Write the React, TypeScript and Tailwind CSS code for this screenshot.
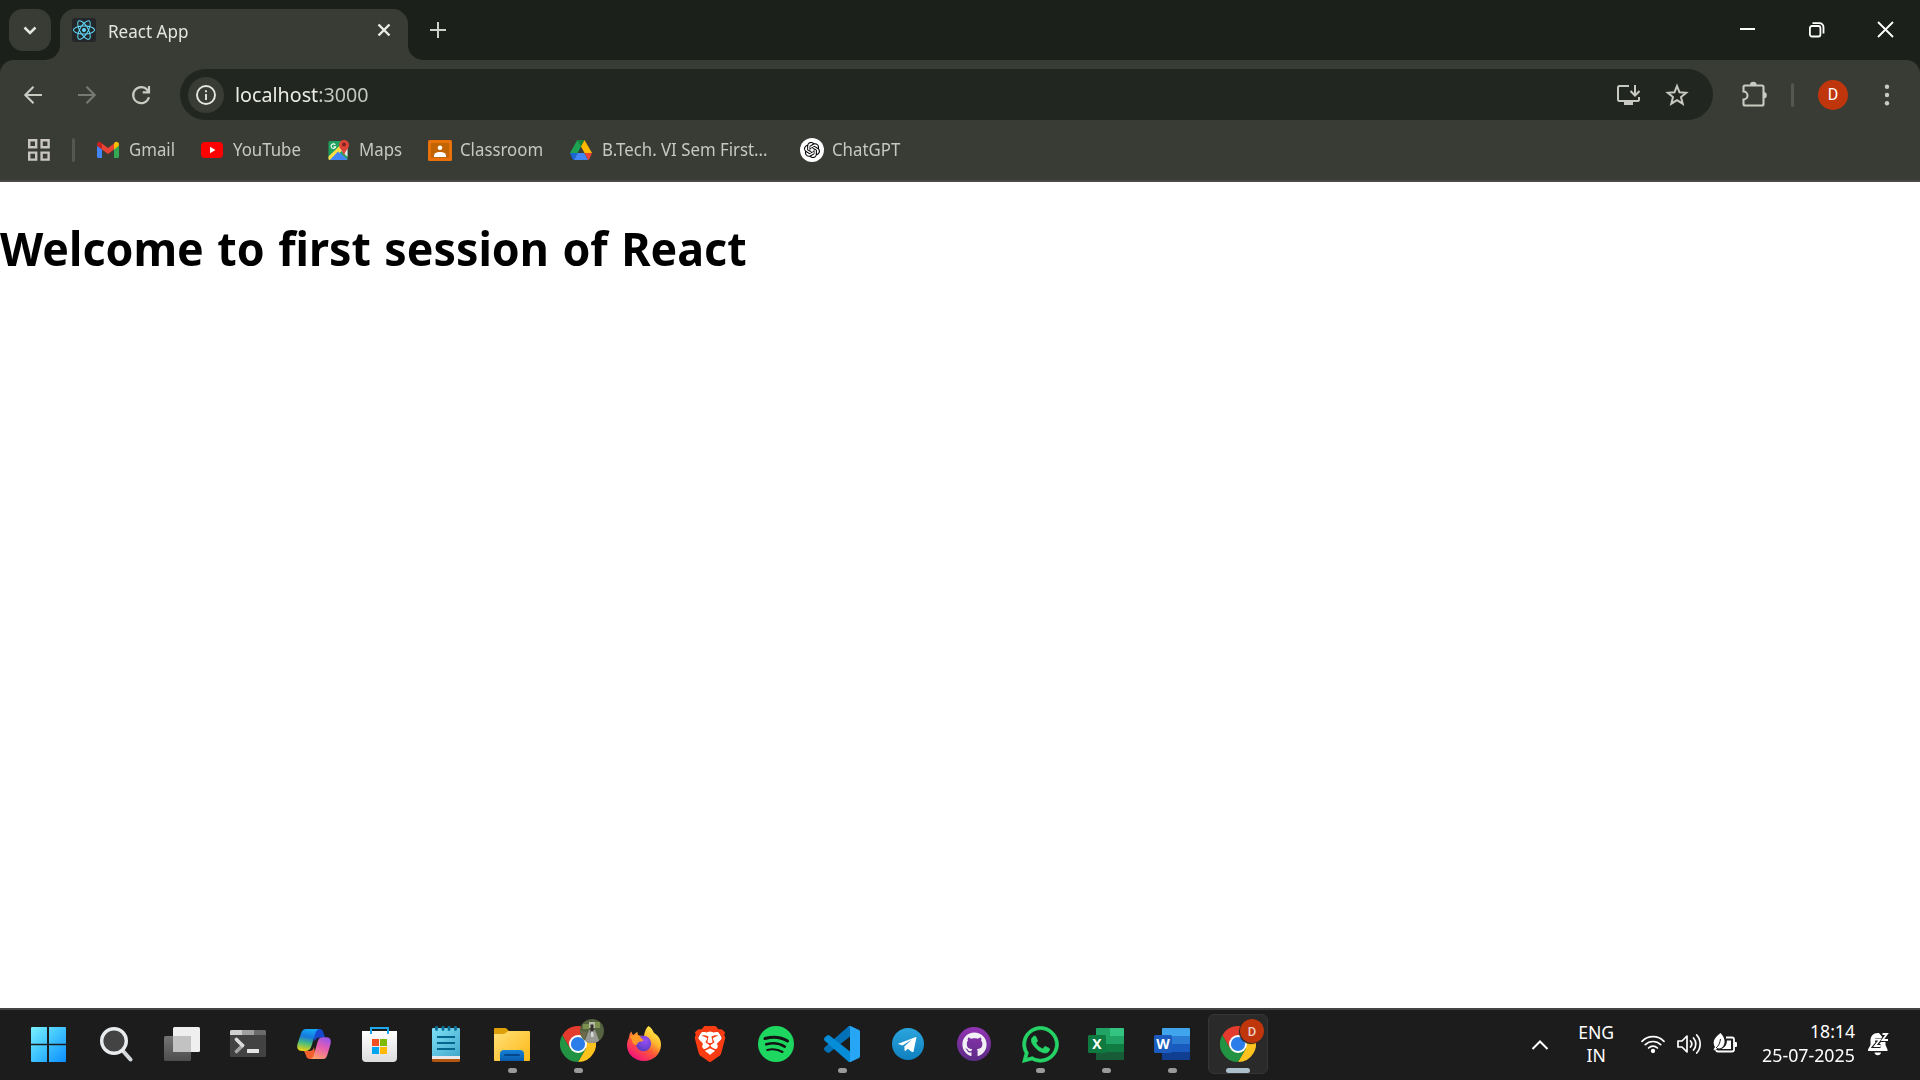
import type { ReactNode } from 'react';
import { SiBrave, SiOpenai, SiReact } from 'react-icons/si';
import { FaGithub, FaWhatsapp } from 'react-icons/fa';

const ReactFavicon = () => (
  <span className="flex h-6 w-6 items-center justify-center rounded-[3px] bg-[#23272a]">
    <SiReact className="h-[22px] w-[22px] text-[#61dafb]" />
  </span>
);

const GmailIcon = () => (
  <svg className="h-[18px] w-[22px]" viewBox="0 0 22 18">
    <path d="M0 5v10.500a1.500 1.500 0 0 0 1.500 1.500H5V7.500z" fill="#4285f4" />
    <path d="M17 7.500V17h3.500a1.500 1.500 0 0 0 1.500-1.500V5z" fill="#34a853" />
    <path d="M17 2.500v6l5-3.800V3.500C22 1 19.300 0 17.500 1.500z" fill="#fbbc04" />
    <path d="M5 8.500v-6l6 4.500 6-4.500v6L11 13z" fill="#ea4335" />
    <path d="M0 3.500v1.300l5 3.700v-6L4.500 1.500C2.700 0 0 1 0 3.500z" fill="#c5221f" />
  </svg>
);

const YouTubeIcon = () => (
  <svg className="h-4 w-[22px]" viewBox="0 0 22 16">
    <rect width="22" height="16" rx="4" fill="#f00" />
    <path d="M9 4.700v6.600L14.500 8z" fill="#fff" />
  </svg>
);

const MapsIcon = () => (
  <svg className="h-[22px] w-[22px]" viewBox="0 0 22 22">
    <rect x="0.500" y="2" width="19" height="19" rx="1.500" fill="#1fa15d" />
    <path d="M10 12l9.500 8.500V21H1z" fill="#4f8df5" />
    <path d="M0.500 17.500L15 3.500 19 7 4 21H2a1.500 1.500 0 0 1-1.500-1.500z" fill="#ffdc48" />
    <path d="M10 12.500L18.500 21H1.800z" fill="#4285f4" />
    <path d="M12 10.500L19.500 18V9l-4-2z" fill="#e3e6ea" />
    <path d="M16 1a5 5 0 0 1 5 5c0 4-4 5-5 11-1-6-5-7-5-11a5 5 0 0 1 5-5z" fill="#db4437" />
    <circle cx="16" cy="5.500" r="1.900" fill="#7b231e" />
    <path d="M7.300 5.800a2.300 2.300 0 1 0 .3 2.100H5.500" fill="none" stroke="#fff" strokeWidth="1.100" />
  </svg>
);

const ClassroomIcon = () => (
  <svg className="h-[21px] w-6" viewBox="0 0 24 21">
    <rect width="24" height="21" rx="1.500" fill="#e8710a" />
    <rect x="3" y="3" width="18" height="15" fill="#c26401" />
    <circle cx="12" cy="7.800" r="2.300" fill="#fff" />
    <path d="M6 17v-1.500c0-2.500 3-3.500 6-3.500s6 1 6 3.500V17z" fill="#fff" />
  </svg>
);

const DriveIcon = () => (
  <svg className="h-5 w-[22px]" viewBox="0 0 22 20">
    <path d="M7.300 0h4.200L11 6.500 7.500 13H0z" fill="#1ea353" />
    <path d="M7.300 0h7.200L11 6.500z" fill="#188038" />
    <path d="M14.500 0L22 13h-7.500L11 6.500z" fill="#ffba00" />
    <path d="M0 13h7.500L4 20c-.7 0-1-.3-1.300-.8z" fill="#1967d2" />
    <path d="M7.500 13h7L18 20H4z" fill="#4285f4" />
    <path d="M14.500 13H22l-2.700 6.200c-.3.500-.7.800-1.300.8z" fill="#ea4335" />
  </svg>
);

const ChatGptIcon = () => (
  <span className="flex h-6 w-6 items-center justify-center rounded-full bg-white">
    <SiOpenai className="h-4 w-4 text-black" />
  </span>
);

const WindowsIcon = () => (
  <svg className="mr-[5px] h-9 w-9" viewBox="0 0 36 36">
    <defs>
      <linearGradient id="win" x1="0" y1="0" x2="36" y2="36" gradientUnits="userSpaceOnUse">
        <stop offset="0" stopColor="#7df4ff" />
        <stop offset="0.450" stopColor="#45c8ff" />
        <stop offset="1" stopColor="#0a8eff" />
      </linearGradient>
    </defs>
    <path d="M2 1h15v17H1V2a1 1 0 0 1 1-1zM19 1h16a1 1 0 0 1 1 1v16H19zM1 19h16v17H2a1 1 0 0 1-1-1zM19 19h17v16a1 1 0 0 1-1 1H19z" fill="url(#win)" />
    <path d="M18 1v35M1 18.500h35" stroke="#1c1c1c" strokeWidth="1.500" />
  </svg>
);

const SearchIcon = () => (
  <svg className="h-9 w-9" viewBox="0 0 36 36">
    <path d="M25 25l7.500 8.500" stroke="#d5d8db" strokeWidth="4" strokeLinecap="round" />
    <circle cx="16" cy="15" r="12.300" fill="#434343" stroke="#e9ecee" strokeWidth="3.400" />
  </svg>
);

const TaskViewIcon = () => (
  <svg className="h-9 w-9" viewBox="0 0 36 36">
    <defs>
      <linearGradient id="tv" x1="0" y1="0" x2="0" y2="1">
        <stop offset="0" stopColor="#747474" />
        <stop offset="1" stopColor="#4d4d4d" />
      </linearGradient>
    </defs>
    <rect x="0" y="10" width="27" height="25" rx="1.500" fill="url(#tv)" />
    <rect x="9" y="1" width="27" height="25" rx="1.500" fill="#efefef" />
    <path d="M9 10h18v16H10a1 1 0 0 1-1-1z" fill="#c2c2c2" />
  </svg>
);

const TerminalIcon = () => (
  <svg className="h-9 w-9" viewBox="0 0 36 36">
    <rect y="4" width="36" height="27" rx="1.500" fill="#424242" />
    <path d="M1.500 4H12v5H0V5.500A1.500 1.500 0 0 1 1.500 4z" fill="#cfcfcf" />
    <path d="M12 4h12v5H12z" fill="#a0a0a0" />
    <path d="M24 4h10.500A1.500 1.500 0 0 1 36 5.500V9H24z" fill="#6b6b6b" />
    <path d="M12.500 19.500L6.500 25.500" stroke="#a5a5a5" strokeWidth="3.600" strokeLinecap="round" />
    <path d="M6.500 13.500l6 6" stroke="#dcdcdc" strokeWidth="3.600" strokeLinecap="round" />
    <rect x="17" y="23" width="12" height="4" rx="0.500" fill="#e6e6e6" />
  </svg>
);

const CopilotIcon = () => (
  <svg className="h-9 w-9" viewBox="0 0 36 36">
    <defs>
      <linearGradient id="cpA" x1="0.500" y1="0" x2="0.300" y2="1">
        <stop offset="0" stopColor="#14a7f5" />
        <stop offset="0.350" stopColor="#1678dc" />
        <stop offset="0.650" stopColor="#4bbd7c" />
        <stop offset="1" stopColor="#efd213" />
      </linearGradient>
      <linearGradient id="cpB" x1="0.700" y1="0" x2="0.300" y2="1">
        <stop offset="0" stopColor="#9a55ec" />
        <stop offset="0.450" stopColor="#e65fae" />
        <stop offset="1" stopColor="#ffa06b" />
      </linearGradient>
    </defs>
    <path d="M15 3h8.500c2.500 0 3.300 1.500 4 4l1.500 4.500h-5c-3 0-4.500 1.500-5.300 4z" fill="#1749d0" />
    <path d="M8 25h5c3 0 4-1 5-4l2 12h-6c-2.500 0-3.500-1.500-4-3.500z" fill="#f4602c" />
    <path d="M10 3h14c-2.500 0-3.800 1.500-4.700 4.500L15.500 20c-1 3.500-3 5-6 5H6c-4 0-5.500-3-4.500-7L5 7.500C6 4.500 7.500 3 10 3z" fill="url(#cpA)" />
    <path d="M27 33H13.500c2.500 0 3.500-1.500 4.500-4.500L21.500 16c1-3.500 2.500-4.800 5.500-4.800h3.500c4 0 5 3 4 7L31.500 28.500C30.500 31.500 29.500 33 27 33z" fill="url(#cpB)" />
  </svg>
);

const StoreIcon = () => (
  <svg className="h-9 w-9" viewBox="0 0 36 36">
    <defs>
      <linearGradient id="st" x1="0" y1="0" x2="0" y2="1">
        <stop offset="0" stopColor="#fff" />
        <stop offset="1" stopColor="#dcdcdc" />
      </linearGradient>
    </defs>
    <path d="M0 5h35v27a4 4 0 0 1-4 4H4a4 4 0 0 1-4-4z" fill="url(#st)" />
    <path d="M9 8V2h17v6" fill="none" stroke="#1ea7ea" strokeWidth="2" />
    <path d="M10 13h7v7h-7z" fill="#f25022" />
    <path d="M18 13h7v7h-7z" fill="#7fba00" />
    <path d="M10 21h7v7h-7z" fill="#00a4ef" />
    <path d="M18 21h7v7h-7z" fill="#ffb900" />
  </svg>
);

const NotepadIcon = () => (
  <svg className="h-9 w-9" viewBox="0 0 36 36">
    <defs>
      <linearGradient id="np" x1="0" y1="0" x2="1" y2="1">
        <stop offset="0" stopColor="#7ee0f6" />
        <stop offset="1" stopColor="#42a9cc" />
      </linearGradient>
    </defs>
    <rect x="4" y="26" width="28" height="10" rx="1.500" fill="#b5560f" />
    <path d="M4 28h28v5H4z" fill="#e8e8ea" />
    <path d="M5 2h26a1 1 0 0 1 1 1v27H4V3a1 1 0 0 1 1-1z" fill="url(#np)" />
    <path d="M9 11h18M9 17h18M9 23h18" stroke="#03678d" strokeWidth="2" />
    <path d="M8.500 1v2.500M15 1v2.500M21 1v2.500M27.500 1v2.500" stroke="#0b6f96" strokeWidth="2.800" strokeLinecap="round" />
  </svg>
);

const ExplorerIcon = () => (
  <svg className="h-9 w-9" viewBox="0 0 36 36">
    <defs>
      <linearGradient id="ex" x1="0" y1="0" x2="1" y2="1">
        <stop offset="0" stopColor="#ffe07a" />
        <stop offset="1" stopColor="#fdb813" />
      </linearGradient>
      <linearGradient id="exb" x1="0" y1="0" x2="0" y2="1">
        <stop offset="0" stopColor="#1482d8" />
        <stop offset="1" stopColor="#0a5cab" />
      </linearGradient>
    </defs>
    <path d="M0 3a1 1 0 0 1 1-1h10c1.500 0 2.500 1.500 4 3v4H0z" fill="#dea00a" />
    <path d="M0 8h9c3 0 4-3 6-3h20a1 1 0 0 1 1 1v28a1 1 0 0 1-1 1H1a1 1 0 0 1-1-1z" fill="url(#ex)" />
    <path d="M6 35v-7a4 4 0 0 1 4-4h16a4 4 0 0 1 4 4v7z" fill="url(#exb)" />
    <path d="M11 29h14" stroke="#06468a" strokeWidth="1.800" strokeLinecap="round" />
  </svg>
);

const ChromeIcon = () => (
  <svg className="h-9 w-9" viewBox="0 0 36 36">
    <path d="M18 9h15.600A18 18 0 0 1 18 36l7.800-13.500z" fill="#fcc31e" />
    <path d="M10.200 22.500L2.400 9A18 18 0 0 0 18 36l7.800-13.500z" fill="#229342" />
    <path d="M18 9h15.600A18 18 0 0 0 2.400 9l7.800 13.500z" fill="#e33b2e" />
    <circle cx="18" cy="18" r="9" fill="#fff" />
    <circle cx="18" cy="18" r="7.100" fill="#2b7de9" />
  </svg>
);

const FirefoxIcon = () => (
  <svg className="h-9 w-9" viewBox="0 0 36 36">
    <defs>
      <linearGradient id="ff" x1="0.850" y1="0.050" x2="0.250" y2="0.950">
        <stop offset="0" stopColor="#fff14a" />
        <stop offset="0.350" stopColor="#ffb82e" />
        <stop offset="0.600" stopColor="#ff5a35" />
        <stop offset="1" stopColor="#f2137e" />
      </linearGradient>
      <radialGradient id="ffp" cx="0.600" cy="0.300" r="0.700">
        <stop offset="0" stopColor="#9a50f5" />
        <stop offset="1" stopColor="#5a3bc4" />
      </radialGradient>
    </defs>
    <path d="M22.500 0c3 2 4.500 4.500 5.500 7 4.500 2.500 7.200 7 7 12-.2 9-7.500 16-17 16S1 28 1 19.500c0-3 .7-5.500 2-8 .2-2.700 1.200-5 2.500-6 .3 1.600.8 2.600 1.700 3.600C9 8 10 6.500 11.500 5.800c-.2 1.700.2 2.800 1.300 3.700l5.200.5c.5-4 2-8 4.500-10z" fill="url(#ff)" />
    <circle cx="17.500" cy="17.500" r="7.700" fill="url(#ffp)" />
    <path d="M3.500 11c3-2.500 7-2.500 9.500-1l4.500 4c-1.500 2.200-3.500 1.300-5 2.300-1.500 1-.8 2.700-2.500 2.700C5 18 7 12.500 3.500 11z" fill="#ff9a28" />
  </svg>
);

const BraveIcon = () => (
  <span className="relative flex h-9 w-9 items-center justify-center">
    <svg className="absolute inset-0 h-9 w-9" viewBox="0 0 36 36">
      <path d="M9 6l9-1 9 1 3 6-4 14-8 6-8-6-4-14z" fill="#fff" />
    </svg>
    <SiBrave className="relative h-9 w-9 text-[#fb3c13]" />
  </span>
);

const SpotifyIcon = () => (
  <svg className="h-9 w-9" viewBox="0 0 36 36">
    <circle cx="18" cy="18" r="18" fill="#1ed760" />
    <g fill="none" stroke="#141414" strokeLinecap="round">
      <path d="M7 12.500c8-2.200 16.500-1.300 22.500 2.500" strokeWidth="3.100" />
      <path d="M8.300 18.300c6.500-1.900 13.500-1 18.500 2.300" strokeWidth="2.600" />
      <path d="M9.300 24c5.500-1.400 10.800-.7 15.200 2" strokeWidth="2.100" />
    </g>
  </svg>
);

const VsCodeIcon = () => (
  <svg className="h-9 w-9" viewBox="0 0 36 36">
    <path d="M26 10.500L5.500 26.400c-.8.600-1.800.600-2.500 0l-2.300-2C-.2 23.500-.2 22 .7 21.200L24 .8 26.500 0z" fill="#0271b8" />
    <path d="M26 25.500L5.500 9.600C4.700 9 3.700 9 3 9.600l-2.300 2c-.9.900-.9 2.400 0 3.200L24 35.200l2.500.8z" fill="#078dd8" />
    <path d="M26.500 0L35 4a1.800 1.800 0 0 1 1 1.700v24.600A1.800 1.800 0 0 1 35 32l-8.500 4c-1 .3-1.800 0-2.700-.8 1 .8 2.200.3 2.200-1V1.800c0-1.300-1.200-1.800-2.200-1 .9-.8 1.700-1.100 2.700-.8z" fill="#26a6f4" />
  </svg>
);

const TelegramIcon = () => (
  <svg className="h-9 w-9" viewBox="0 0 36 36">
    <defs>
      <linearGradient id="tg" x1="0" y1="0" x2="0" y2="1">
        <stop offset="0" stopColor="#2ba5dd" />
        <stop offset="1" stopColor="#0f80bf" />
      </linearGradient>
    </defs>
    <circle cx="18" cy="18" r="16" fill="url(#tg)" />
    <path d="M8.200 17.800l17-6.600c.8-.3 1.300.2 1.100 1.100l-2.700 12.900c-.2.900-.8 1.100-1.600.7l-4.300-3.200-2 2c-.4.400-.8.500-1 .2l-.4-4.500 7.600-6.900-9.400 5.900-4.300-1.300c-.600-.1-.6-.1 0-.3z" fill="#fff" />
  </svg>
);

const GitHubIcon = () => (
  <span className="flex h-[34px] w-[34px] items-center justify-center rounded-full bg-linear-to-b from-[#9233b4] to-[#5c2b86]">
    <FaGithub className="h-[25px] w-[25px] text-[#f2f0f5]" />
  </span>
);

const ExcelIcon = () => (
  <svg className="h-9 w-9" viewBox="0 0 36 36">
    <path d="M9 2h14v8H8V3a1 1 0 0 1 1-1z" fill="#21a366" />
    <path d="M22 2h13a1 1 0 0 1 1 1v7H22z" fill="#33c481" />
    <path d="M8 10h14v8H8z" fill="#21a366" />
    <path d="M22 10h14v8H22z" fill="#21a366" />
    <path d="M8 18h28v8H8z" fill="#107c41" />
    <path d="M8 26h28v7a1 1 0 0 1-1 1H9a1 1 0 0 1-1-1z" fill="#185c37" />
    <rect x="0" y="9" width="18" height="18" rx="1.500" fill="#0f7a3f" />
    <text x="9" y="23.200" textAnchor="middle" className="fill-white font-['Open_Sans',sans-serif] text-[14px] font-bold">X</text>
  </svg>
);

const WordIcon = () => (
  <svg className="h-9 w-9" viewBox="0 0 36 36">
    <path d="M9 2h26a1 1 0 0 1 1 1v7H8V3a1 1 0 0 1 1-1z" fill="#41a5ee" />
    <path d="M8 10h28v8H8z" fill="#2b7cd3" />
    <path d="M8 18h28v8H8z" fill="#185abd" />
    <path d="M8 26h28v7a1 1 0 0 1-1 1H9a1 1 0 0 1-1-1z" fill="#103f91" />
    <rect x="0" y="9" width="18" height="18" rx="1.500" fill="#1b5cbe" />
    <text x="9" y="23.200" textAnchor="middle" className="fill-white font-['Open_Sans',sans-serif] text-[14px] font-bold">W</text>
  </svg>
);

const PhotoBadge = () => (
  <svg className="absolute top-[-7px] left-5 h-6 w-6" viewBox="0 0 24 24">
    <defs>
      <clipPath id="ph"><circle cx="12" cy="12" r="12" /></clipPath>
      <filter id="soft"><feGaussianBlur stdDeviation="0.700" /></filter>
    </defs>
    <g clipPath="url(#ph)">
      <path d="M0 0h24v24H0z" fill="#566340" />
      <g filter="url(#soft)">
        <path d="M3 5h6v5H3zM15 3h5v6h-5z" fill="#7d9150" />
        <path d="M9 3h6v6H9z" fill="#b8bda9" />
        <path d="M9 11h6l5 13H4z" fill="#999a94" />
        <path d="M10.500 5.500h3V14h-3z" fill="#33302e" />
        <path d="M11 12.500h2.500V18H11z" fill="#d6d8d8" />
        <path d="M0 12l7 1-3 8z" fill="#6d6a4d" />
      </g>
    </g>
  </svg>
);

const LetterBadge = () => (
  <span className="absolute top-[-7px] left-5 flex h-6 w-6 items-center justify-center rounded-full bg-[#bf360c] text-[13px] leading-none font-medium text-[#eccfc5] shadow-[-1px_1px_1px_#222] font-['Roboto',sans-serif]">D</span>
);

type App = { icon: ReactNode; state?: 'open' | 'active' };

const taskbarApps: App[] = [
  { icon: <WindowsIcon /> },
  { icon: <SearchIcon /> },
  { icon: <TaskViewIcon /> },
  { icon: <TerminalIcon /> },
  { icon: <CopilotIcon /> },
  { icon: <StoreIcon /> },
  { icon: <NotepadIcon /> },
  { icon: <ExplorerIcon />, state: 'open' },
  { icon: <span className="relative"><ChromeIcon /><PhotoBadge /></span>, state: 'open' },
  { icon: <FirefoxIcon /> },
  { icon: <BraveIcon /> },
  { icon: <SpotifyIcon /> },
  { icon: <VsCodeIcon />, state: 'open' },
  { icon: <TelegramIcon /> },
  { icon: <GitHubIcon /> },
  { icon: <FaWhatsapp className="h-[41px] w-[41px] stroke-[#25d366] stroke-[10px] text-[#25d366]" />, state: 'open' },
  { icon: <ExcelIcon />, state: 'open' },
  { icon: <WordIcon />, state: 'open' },
  { icon: <span className="relative"><ChromeIcon /><LetterBadge /></span>, state: 'active' },
];

const bookmarks = [
  { icon: <GmailIcon />, label: 'Gmail', width: 'w-[104px]', gap: 'gap-[10px]' },
  { icon: <YouTubeIcon />, label: 'YouTube', width: 'w-[127px]', gap: 'gap-[10px]' },
  { icon: <MapsIcon />, label: 'Maps', width: 'w-[100px]', gap: 'gap-[9px]' },
  { icon: <ClassroomIcon />, label: 'Classroom', width: 'w-[142px]', gap: 'gap-2' },
  { icon: <DriveIcon />, label: 'B.Tech. VI Sem First...', width: 'w-[230px]', gap: 'gap-[10px]' },
  { icon: <ChatGptIcon />, label: 'ChatGPT', width: 'w-[110px]', gap: 'gap-2' },
];

const TabStrip = () => (
  <header className="flex h-[60px] items-start bg-[#1c201b]">
    <button className="mt-[9px] ml-[9px] flex h-[42px] w-[42px] items-center justify-center rounded-[14px] bg-[#383c35]">
      <svg className="h-[14px] w-[14px]" viewBox="0 0 14 14" fill="none" stroke="#e5e5e0" strokeWidth="2.500"><path d="M1.500 4.500L7 10l5.500-5.500" /></svg>
    </button>
    <div className="flex h-[60px] items-end">
      <svg className="ml-[-6px] h-[15px] w-[15px]" viewBox="0 0 15 15"><path d="M15 0v15H0A15 15 0 0 0 15 0z" fill="#383c35" /></svg>
      <div className="flex h-[51px] w-[348px] items-start rounded-t-[15px] bg-[#383c35] pl-3">
        <span className="mt-[9px]"><ReactFavicon /></span>
        <span className="mt-[10px] ml-3 w-[269px] text-[17.6px] leading-6 text-[#e5e5e0]"><span className="inline-block origin-left scale-x-[0.970]">React App</span></span>
        <svg className="mt-[14px] h-[14px] w-[14px]" viewBox="0 0 14 14" stroke="#ecece8" strokeWidth="2.400"><path d="M1.500 1.500l11 11M12.500 1.500l-11 11" /></svg>
      </div>
      <svg className="h-[15px] w-[15px]" viewBox="0 0 15 15"><path d="M0 0v15h15A15 15 0 0 1 0 0z" fill="#383c35" /></svg>
    </div>
    <svg className="mt-[22px] ml-[7px] h-4 w-4" viewBox="0 0 16 16" stroke="#cfd2c8" strokeWidth="2"><path d="M8 0v16M0 8h16" /></svg>
    <div className="mt-[21px] mr-[26px] ml-auto flex gap-[52px]">
      <svg className="h-[17px] w-[17px]" viewBox="0 0 17 17" stroke="#fff" strokeWidth="2"><path d="M1 8h15" /></svg>
      <svg className="h-[17px] w-[17px]" viewBox="0 0 17 17" fill="none" stroke="#fff" strokeWidth="1.800"><rect x="1.900" y="5" width="10.500" height="10.500" rx="2" /><path d="M4.500 2.200h7a4 4 0 0 1 4 4V12.500" /></svg>
      <svg className="h-[17px] w-[17px]" viewBox="0 0 17 17" stroke="#fff" strokeWidth="1.800"><path d="M1 1l15 15M16 1L1 16" /></svg>
    </div>
  </header>
);

const AddressBar = () => (
  <div className="flex h-[51px] items-center">
    <svg className="ml-[22px] h-[22px] w-[22px]" viewBox="0 0 22 22" fill="none" stroke="#c8cbc0" strokeWidth="2.100"><path d="M20 11H3.500M11.500 2.800L3.300 11l8.200 8.200" /></svg>
    <svg className="ml-8 h-[22px] w-[22px]" viewBox="0 0 22 22" fill="none" stroke="#777a72" strokeWidth="2.100"><path d="M2 11h16.500M10.500 2.800l8.200 8.200-8.200 8.200" /></svg>
    <svg className="ml-8 h-[22px] w-[22px]" viewBox="0 0 22 22" fill="none" stroke="#c8cbc0" strokeWidth="2.200"><path d="M18.900 13.200A8 8 0 1 1 17.300 6l1.700 2M19 2v6.300h-6.300" /></svg>
    <div className="ml-[28px] flex h-[51px] w-[1533px] items-center rounded-full bg-[#222620] pl-2">
      <span className="flex h-9 w-9 items-center justify-center rounded-full bg-[#383c35]">
        <svg className="h-5 w-5" viewBox="0 0 20 20" fill="none" stroke="#e5e5e0" strokeWidth="1.900"><circle cx="10" cy="10" r="9" /><path d="M10 9v6M10 5.200v2" /></svg>
      </span>
      <span className="ml-[11px] flex origin-left scale-x-[0.985] text-[20px] leading-6 text-[#c3c6bc]"><span className="text-[#ecece6]">localhost</span>:3000</span>
      <svg className="mr-[25px] ml-auto h-6 w-6" viewBox="0 0 24 24" fill="none" stroke="#c8c8c2" strokeWidth="2"><path d="M13 3H3.500A1.500 1.500 0 0 0 2 4.500v12A1.500 1.500 0 0 0 3.500 18h18a1.500 1.500 0 0 0 1.500-1.500V14M19 2v10M14.500 8l4.500 4.500L23.500 8" /><path d="M8 18h9v4H8z" fill="#c8c8c2" stroke="none" /></svg>
      <svg className="mr-6 h-6 w-6" viewBox="0 0 24 24" fill="none" stroke="#c8c8c2" strokeWidth="2"><path d="M12 3l2.500 6.300 6.700.5-5.200 4.300 1.700 6.600L12 17.100l-5.700 3.600L8 14.100 2.800 9.800l6.700-.5z" /></svg>
    </div>
    <svg className="ml-7 h-[27px] w-[27px]" viewBox="0 0 27 27"><path d="M4 4.500h17A1.500 1.500 0 0 1 22.500 6v17a1.500 1.500 0 0 1-1.500 1.500H4A1.500 1.500 0 0 1 2.500 23v-4.500a4 4 0 0 0 0-8V6A1.500 1.500 0 0 1 4 4.500z" fill="none" stroke="#c8cbc0" strokeWidth="2.100" /><path d="M9 4a3.300 3.300 0 0 1 6.600 0zM22.500 11a3.300 3.300 0 0 1 0 6.600z" fill="#c8cbc0" /></svg>
    <span className="ml-[23px] h-6 w-[3px] rounded-full bg-[#53574f]" />
    <span className="ml-6 flex h-[30px] w-[30px] items-center justify-center rounded-full bg-[#bf360c] pt-px text-[16px] leading-none text-white font-['Roboto',sans-serif]">D</span>
    <svg className="ml-[33px] h-6 w-[12px]" viewBox="0 0 12 24" fill="#c8cbc0"><circle cx="6" cy="3.800" r="2.200" /><circle cx="6" cy="12" r="2.200" /><circle cx="6" cy="20.200" r="2.200" /></svg>
  </div>
);

const BookmarksBar = () => (
  <nav className="flex h-[60px] items-center">
    <svg className="ml-[28px] h-[22px] w-[22px]" viewBox="0 0 22 22" fill="none" stroke="#c8c5c2" strokeWidth="2.400"><path d="M1.200 1.200h7v7h-7zM13.600 1.200h7v7h-7zM1.200 13.600h7v7h-7zM13.600 13.600h7v7h-7z" /></svg>
    <span className="ml-[22px] h-6 w-[3px] rounded-full bg-[#53574f]" />
    <div className="ml-[22px] flex text-[17.6px] leading-6 text-[#c6c9bf]">
      {bookmarks.map((b) => (
        <a key={b.label} className={`flex items-center whitespace-nowrap ${b.width} ${b.gap}`}>
          <span className="shrink-0">{b.icon}</span>
          <span className="origin-left scale-x-[0.955] pb-[2px]">{b.label}</span>
        </a>
      ))}
    </div>
  </nav>
);

const Taskbar = () => (
  <footer className="flex h-[72px] border-t-2 border-[#444] bg-[#1c1c1c] pl-[17px] text-white">
    {taskbarApps.map((app, i) => (
      <div key={i} className="flex w-[66px] justify-center pt-1">
        <div className={app.state === 'active' ? 'flex h-[60px] w-[60px] flex-col items-center rounded-md border border-[#353535] bg-[#2a2a2a]' : 'flex h-[60px] w-[60px] flex-col items-center border border-transparent'}>
          <div className="flex h-[53px] items-center pt-[5px]">{app.icon}</div>
          {app.state === 'open' && <span className="h-[5px] w-[9px] rounded-full bg-[#9a9a9a]" />}
          {app.state === 'active' && <span className="h-[5px] w-6 rounded-full bg-[#abc0ca]" />}
        </div>
      </div>
    ))}
    <div className="ml-auto flex h-full items-center pb-px">
      <svg className="h-3 w-[18px]" viewBox="0 0 18 12" fill="none" stroke="#fff" strokeWidth="2"><path d="M1.500 10L9 2.500 16.500 10" /></svg>
      <div className="ml-[27px] w-10 pb-px text-center text-[17.6px] leading-[23px]"><div>ENG</div><div>IN</div></div>
      <svg className="ml-[25px] h-6 w-6" viewBox="0 0 24 24" fill="none" stroke="#fff" strokeWidth="1.700" strokeLinecap="round"><path d="M1 8.300a15.500 15.500 0 0 1 22 0M4.300 11.700a10.900 10.900 0 0 1 15.400 0M7.600 15a6.200 6.200 0 0 1 8.800 0" /><circle cx="12" cy="18" r="1.300" fill="#fff" /></svg>
      <svg className="ml-3 h-6 w-6" viewBox="0 0 24 24" fill="none" stroke="#fff" strokeWidth="1.700" strokeLinecap="round" strokeLinejoin="round"><path d="M1 8v6h4l5 5V3L5 8zM13.500 8a4.500 4.500 0 0 1 0 6M16.500 5a9 9 0 0 1 0 12M19.700 2a13.500 13.500 0 0 1 0 18" /></svg>
      <svg className="ml-3 h-6 w-6" viewBox="0 0 24 24"><path d="M13 4.500h6a2 2 0 0 1 2 2v10a2 2 0 0 1-2 2H5A2 2 0 0 1 3 17" fill="none" stroke="#fff" strokeWidth="1.800" /><path d="M21.500 9h1.500a1 1 0 0 1 1 1v3a1 1 0 0 1-1 1h-1.500zM14 7.500h4V16H8.500C12 14.500 14 11.500 14 7.500z" fill="#fff" /><path d="M7.500 0c4 4 5.500 9 2.500 13.500-1.500 2-4 2.300-5.500 1.500L2 17.500.5 16.500 2 14C-1 9 1 5 7.500 0z" fill="#fff" /><path d="M3 15c2.500-2 4-5 4.500-9" fill="none" stroke="#1c1c1c" strokeWidth="1" /></svg>
      <div className="mr-[12px] ml-[26px] pb-[3px] text-right text-[17.6px] leading-6"><div>18:14</div><div className="origin-right scale-x-[1.010]">25-07-2025</div></div>
      <svg className="mr-[29px] h-[25px] w-[24px]" viewBox="0 0 24 25"><path d="M11 1c-5 0-7.500 3.500-7.500 7.500V13L1 17.500V19h19.500v-1.500L18.500 13V9L12 1z" fill="#fff" /><path d="M7.500 20.500h6.500a3.300 3.300 0 0 1-6.500 0z" fill="#fff" /><path d="M8 8h5l-5 6h5.500M15.500 2.500H20L15.500 8H21" fill="none" stroke="#1c1c1c" strokeWidth="4" /><path d="M8 7.500h5l-5 6.500h5.500M15.500 2H20l-4.500 6H21" fill="none" stroke="#fff" strokeWidth="1.800" /></svg>
    </div>
  </footer>
);

export default function App() {
  return (
    <div className="flex h-[1080px] w-[1920px] flex-col overflow-hidden bg-white font-['Noto_Sans','Open_Sans',sans-serif]">
      <TabStrip />
      <div className="bg-[#1c201b]">
        <div className="h-[122px] rounded-t-[14px] border-b-2 border-[#4b4848] bg-[#383c35] pt-[9px]">
          <AddressBar />
          <BookmarksBar />
        </div>
      </div>
      <main className="flex-1 pt-[34px]">
        <h1 className="origin-left scale-x-[0.952] text-[47px] leading-[64px] font-bold [word-spacing:2px] whitespace-nowrap text-black">Welcome to first session of React</h1>
      </main>
      <Taskbar />
    </div>
  );
}
